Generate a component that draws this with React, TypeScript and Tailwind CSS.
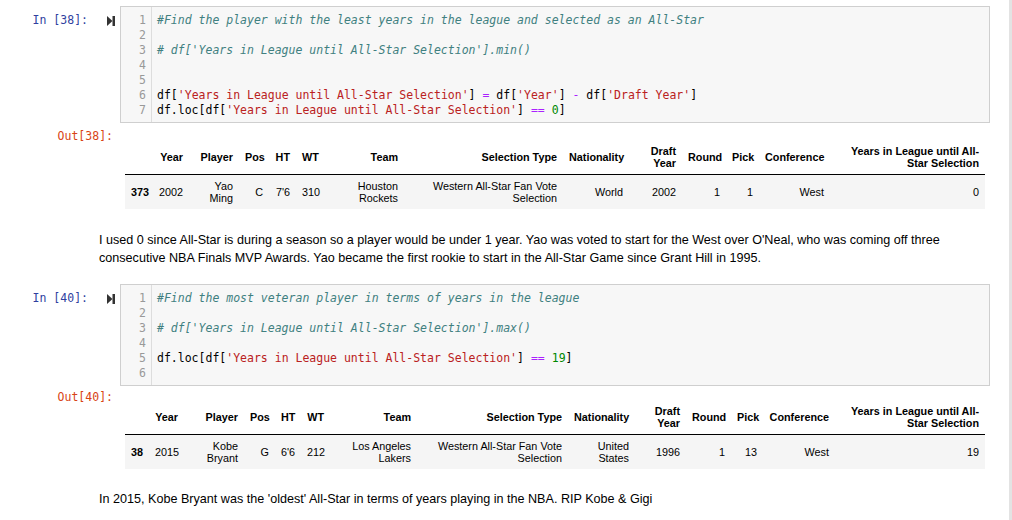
import React from "react"

type Tok = [string, string?]

const mono = "font-['DejaVu_Sans_Mono','Liberation_Mono',monospace] text-[11.5px]"
const sans = "font-['Liberation_Sans',Arial,sans-serif]"

const C = "italic text-[#408080]"
const S = "text-[#ba2121]"
const O = "text-[#aa22ff]"
const N = "text-[#008800]"

const YEARS = "'Years in League until All-Star Selection'"

const cell38: Tok[][] = [
  [["#Find the player with the least years in the league and selected as an All-Star", C]],
  [],
  [[`# df[${YEARS}].min()`, C]],
  [],
  [],
  [["df["], [YEARS, S], ["] "], ["=", O], [" df["], ["'Year'", S], ["] "], ["-", O], [" df["], ["'Draft Year'", S], ["]"]],
  [["df.loc[df["], [YEARS, S], ["] "], ["==", O], [" "], ["0", N], ["]"]],
]

const cell40: Tok[][] = [
  [["#Find the most veteran player in terms of years in the league", C]],
  [],
  [[`# df[${YEARS}].max()`, C]],
  [],
  [["df.loc[df["], [YEARS, S], ["] "], ["==", O], [" "], ["19", N], ["]"]],
  [],
]

const headers = [
  "",
  "Year",
  "Player",
  "Pos",
  "HT",
  "WT",
  "Team",
  "Selection Type",
  "Nationality",
  "Draft Year",
  "Round",
  "Pick",
  "Conference",
  "Years in League until All-Star Selection",
]

function RunIcon() {
  return (
    <svg width="8" height="10" viewBox="0 0 8 10" className="ml-[19px] mr-[5px] mt-[3px] shrink-0">
      <path d="M0 0 L5.5 5 L0 10 Z" fill="#333" />
      <rect x="5.5" y="0" width="2.5" height="10" fill="#333" />
    </svg>
  )
}

function CodeCell({ n, lines }: { n: number; lines: Tok[][] }) {
  return (
    <div className={`flex leading-[15px] ${mono}`}>
      <div className="flex w-[120px] shrink-0 justify-end pt-[7px]">
        <span className="whitespace-pre text-[#303f9f]">In [{n}]:</span>
        <RunIcon />
      </div>
      <div className="flex w-[870px] border border-[#cfcfcf] bg-[#f7f7f7]">
        <div className="w-[31px] shrink-0 border-r border-[#dddddd] pt-[6px] pb-[4px] pr-[5px] text-right text-[#999999]">
          {lines.map((_, i) => (
            <div key={i}>{i + 1}</div>
          ))}
        </div>
        <div className="pt-[6px] pb-[4px] pl-[5px] text-black">
          {lines.map((toks, i) => (
            <div key={i} className="h-[15px] whitespace-pre">
              {toks.map(([t, cls], j) => (
                <span key={j} className={cls}>
                  {t}
                </span>
              ))}
            </div>
          ))}
        </div>
      </div>
    </div>
  )
}

function OutTable({
  n,
  widths,
  row,
  className,
}: {
  n: number
  widths: number[]
  row: string[]
  className: string
}) {
  return (
    <div className={`flex ${className}`}>
      <div className={`w-[120px] shrink-0 pr-[7px] text-right leading-[15px] text-[#d84315] ${mono}`}>
        Out[{n}]:
      </div>
      <div className="pl-[5px]">
        <table
          className={`w-[860px] table-fixed border-collapse text-[10.8px] leading-[12px] text-black ${sans} ${
            n === 38 ? "mt-[11px]" : "mt-[10px]"
          }`}
        >
          <colgroup>
            {widths.map((w, i) => (
              <col key={i} style={{ width: w }} />
            ))}
          </colgroup>
          <thead>
            <tr className="border-b border-black">
              {headers.map((h, i) => (
                <th key={i} className="px-[6px] py-[5px] text-right align-middle font-bold">
                  {h}
                </th>
              ))}
            </tr>
          </thead>
          <tbody>
            <tr className="bg-[#f5f5f5]">
              {row.map((v, i) =>
                i === 0 ? (
                  <th key={i} className="px-[6px] py-[5px] text-right align-middle font-bold">
                    {v}
                  </th>
                ) : (
                  <td key={i} className="px-[6px] py-[5px] text-right align-middle">
                    {v}
                  </td>
                )
              )}
            </tr>
          </tbody>
        </table>
      </div>
    </div>
  )
}

export default function App() {
  return (
    <div className="flex h-[520px] w-[1012px] overflow-hidden bg-white">
      <div className="flex-1 pt-[6px]">
        <CodeCell n={38} lines={cell38} />
        <OutTable
          n={38}
          className="mt-[6px]"
          widths={[27, 37, 50, 30, 27, 28, 80, 159, 66, 53, 44, 33, 71, 155]}
          row={["373", "2002", "Yao Ming", "C", "7'6", "310", "Houston Rockets", "Western All-Star Fan Vote Selection", "World", "2002", "1", "1", "West", "0"]}
        />
        <p className={`ml-[99px] mt-[22px] w-[891px] text-[12.6px] leading-[18px] text-black ${sans}`}>
          I used 0 since All-Star is during a season so a player would be under 1 year. Yao was voted to start for the West
          over O'Neal, who was coming off three consecutive NBA Finals MVP Awards. Yao became the first rookie to start in
          the All-Star Game since Grant Hill in 1995.
        </p>
        <div className="mt-[17px]">
          <CodeCell n={40} lines={cell40} />
        </div>
        <OutTable
          n={40}
          className="mt-[4px]"
          widths={[24, 35, 60, 31, 26, 29, 87, 151, 67, 51, 45, 32, 72, 150]}
          row={["38", "2015", "Kobe Bryant", "G", "6'6", "212", "Los Angeles Lakers", "Western All-Star Fan Vote Selection", "United States", "1996", "1", "13", "West", "19"]}
        />
        <p className={`ml-[99px] mt-[21px] w-[891px] text-[12.6px] leading-[18px] text-black ${sans}`}>
          In 2015, Kobe Bryant was the 'oldest' All-Star in terms of years playing in the NBA. RIP Kobe &amp; Gigi
        </p>
      </div>
      <div className="w-[3px] shrink-0 bg-[#e3e3e3]" />
    </div>
  )
}
